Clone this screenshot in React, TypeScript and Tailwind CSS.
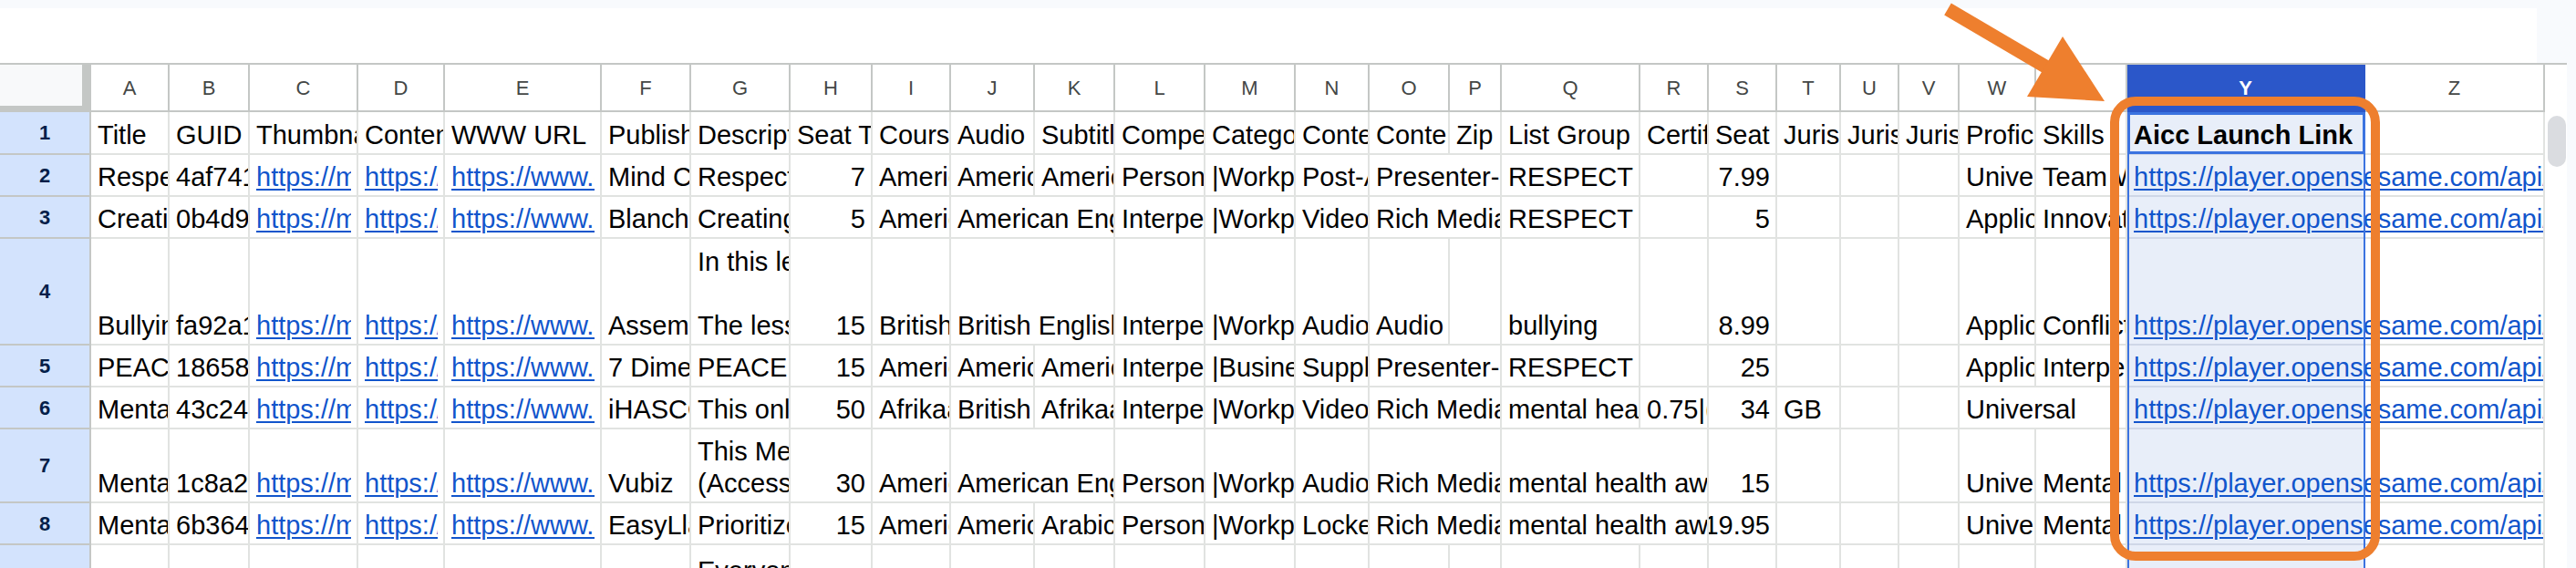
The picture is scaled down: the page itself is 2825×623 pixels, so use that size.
import clsx from 'clsx';

type Cell = { text: string; link?: boolean; num?: boolean; span?: boolean; bold?: boolean };
type Row = Record<string, Cell | string>;

const LETTERS = 'ABCDEFGHIJKLMNOPQRSTUVWXYZ'.split('');

const link = (text: string): Cell => ({ text, link: true });
const num = (text: string): Cell => ({ text, num: true });
const wide = (text: string): Cell => ({ text, span: true });

const launch = (id: string) => link(`https://player.opensesame.com/api/aicc/launch/${id}`);
const media = link('https://media.opensesame.com/thumbnails/course.png');
const content = link('https://content.opensesame.com/course.zip');
const www = link('https://www.opensesame.com/c/course');

const ROWS: Row[] = [
  {
    A: 'Title', B: 'GUID', C: 'Thumbnail URL', D: 'Content URL', E: 'WWW URL', F: 'Publisher',
    G: 'Description', H: 'Seat Time', I: 'Course Language', J: 'Audio', K: 'Subtitles',
    L: 'Competency', M: 'Category', N: 'Content Type', O: 'Content Format', P: 'Zip',
    Q: 'List Group', R: 'Certification', S: 'Seat Price', T: 'Jurisdiction', U: 'Jurisdiction',
    V: 'Jurisdiction', W: 'Proficiency', X: 'Skills', Y: { text: 'Aicc Launch Link', bold: true },
  },
  {
    A: 'Respectful Workplace', B: '4af741c0-92d1', C: media, D: content, E: www, F: 'Mind Candy',
    G: 'Respectful behaviour at work', H: num('7'), I: 'American English', J: 'American English',
    K: 'American English', L: 'Personal Development', M: '|Workplace Skills|', N: 'Post-Assessment',
    O: wide('Presenter-led Video'), Q: 'RESPECT', S: num('7.99'), W: 'Universal', X: 'Team Work',
    Y: launch('4af741c0'),
  },
  {
    A: 'Creating Respect', B: '0b4d9e17-55a0', C: media, D: content, E: www, F: 'Blanchard',
    G: 'Creating a respectful culture', H: num('5'), I: 'American English', J: wide('American English'),
    L: 'Interpersonal Skills', M: '|Workplace Skills|', N: 'Video', O: wide('Rich Media'),
    Q: 'RESPECT', S: num('5'), W: 'Application', X: 'Innovation', Y: launch('0b4d9e17'),
  },
  {
    A: 'Bullying at Work', B: 'fa92a1d3-08bc', C: media, D: content, E: www, F: 'Assemble You',
    G: 'In this lesson we look at bullying\n\nThe lesson covers what to do', H: num('15'),
    I: 'British English', J: wide('British English'), L: 'Interpersonal Skills',
    M: '|Workplace Skills|', N: 'Audio', O: 'Audio', Q: 'bullying', S: num('8.99'),
    W: 'Application', X: 'Conflict Resolution', Y: launch('fa92a1d3'),
  },
  {
    A: 'PEACE Conversations', B: '18658a0f-3e21', C: media, D: content, E: www, F: '7 Dimensions',
    G: 'PEACE conversations at work', H: num('15'), I: 'American English', J: 'American English',
    K: 'American English', L: 'Interpersonal Skills', M: '|Business Skills|', N: 'Supplemental',
    O: wide('Presenter-led Video'), Q: 'RESPECT', S: num('25'), W: 'Application',
    X: 'Interpersonal Skills', Y: launch('18658a0f'),
  },
  {
    A: 'Mental Health Awareness', B: '43c24b7e-9a10', C: media, D: content, E: www, F: 'iHASCO',
    G: 'This online course explains', H: num('50'), I: 'Afrikaans', J: 'British English',
    K: 'Afrikaans', L: 'Interpersonal Skills', M: '|Workplace Skills|', N: 'Video',
    O: wide('Rich Media'), Q: 'mental health awareness', R: '0.75|(CPD)', S: num('34'), T: 'GB',
    W: wide('Universal'), Y: launch('43c24b7e'),
  },
  {
    A: 'Mental Health First Steps', B: '1c8a2f60-d4e3', C: media, D: content, E: www, F: 'Vubiz',
    G: 'This Mental Health course\n(Accessible version)', H: num('30'), I: 'American English',
    J: wide('American English'), L: 'Personal Development', M: '|Workplace Skills|', N: 'Audio',
    O: wide('Rich Media'), Q: wide('mental health awareness'), S: num('15'), W: 'Universal',
    X: 'Mental Health', Y: launch('1c8a2f60'),
  },
  {
    A: 'Mental Health Priorities', B: '6b364c12-7f88', C: media, D: content, E: www, F: 'EasyLlama',
    G: 'Prioritize your wellbeing', H: num('15'), I: 'American English', J: 'American English',
    K: 'Arabic', L: 'Personal Development', M: '|Workplace Skills|', N: 'Locked',
    O: wide('Rich Media'), Q: wide('mental health awareness'), S: num('19.95'), W: 'Universal',
    X: 'Mental Health', Y: launch('6b364c12'),
  },
  {
    G: 'Everyone deserves a safe workplace\nThis course explains\nhow to speak up',
  },
];

function HeaderCell({ letter }: { letter: string }) {
  const active = letter === 'Y';
  return (
    <div
      className={clsx(
        'flex items-center justify-center border-b-2 border-r-2 text-[22px]',
        active ? 'border-[#2b57c9] bg-[#2b57c9] font-bold text-white' : 'border-[#c4c7c5] text-[#444746]',
      )}
    >
      {letter}
    </div>
  );
}

function DataCell({ cell, letter }: { cell?: Cell | string; letter: string }) {
  const c: Cell | undefined = typeof cell === 'string' ? { text: cell } : cell;
  const inY = letter === 'Y';
  return (
    <div
      className={clsx(
        'flex min-w-0 flex-col justify-end whitespace-pre border-b-2 border-r-2 pb-[2px] pl-[7px] pr-[6px] leading-[35px]',
        inY ? 'overflow-visible border-[#cfd7e7] bg-[#e8eef9]' : 'overflow-hidden border-[#e1e3e1]',
        c?.span && 'col-span-2',
        c?.num && 'items-end',
        c?.bold && 'font-bold',
      )}
    >
      {c?.link ? (
        <span
          className={clsx(
            'overflow-hidden text-[#1155cc] underline decoration-2 underline-offset-[3px]',
            inY && 'block w-[449px]',
          )}
        >
          {c.text}
        </span>
      ) : (
        c?.text
      )}
    </div>
  );
}

export default function App() {
  return (
    <div className="relative h-[623px] w-[2825px] overflow-hidden bg-[#f8fafd] font-['Liberation_Sans',Arial,sans-serif] text-[29px] text-black">
      <div className="mt-[9px] h-[60px] w-[2782px] bg-white" />

      <div className="flex">
        <div className="relative grid grid-cols-[100px_86px_88px_119px_95px_172px_98px_109px_90px_86px_92px_88px_99px_99px_81px_88px_57px_152px_75px_75px_70px_64px_66px_84px_100px_261px_197px] grid-rows-[52px_47px_46px_46px_117px_46px_46px_81px_46px_120px] border-t-2 border-[#c4c7c5] bg-white">
          {/* frozen corner */}
          <div className="border-b-[7px] border-r-[10px] border-[#c4c7c5] bg-[#f8f9fa]" />
          {LETTERS.map((l) => (
            <HeaderCell key={l} letter={l} />
          ))}

          {ROWS.map((row, r) => {
            const cells = [];
            let skip = false;
            LETTERS.forEach((letter) => {
              if (skip) {
                skip = false;
                return;
              }
              const cell = row[letter];
              if (typeof cell === 'object' && cell.span) skip = true;
              cells.push(<DataCell key={`${r}-${letter}`} cell={cell} letter={letter} />);
            });
            return [
              <div
                key={`h${r}`}
                className="flex items-center justify-center border-b-2 border-r-2 border-[#c4c7c5] bg-[#d3e3fd] text-[22px] font-bold text-[#041e49]"
              >
                {r + 1}
              </div>,
              ...cells,
            ];
          })}

          {/* selected column frame and active cell */}
          <div className="pointer-events-none absolute bottom-0 left-0 right-0 top-0 col-start-[26] col-end-[27] row-start-[2] row-end-[11] border-x-2 border-[#3b73e0]" />
          <div className="pointer-events-none absolute bottom-[1px] left-0 right-0 top-0 col-start-[26] col-end-[27] row-start-[2] row-end-[3] border-[3px] border-[#3b73e0]" />
        </div>

        {/* vertical scrollbar */}
        <div className="h-[554px] w-[24px] border-t-2 border-[#c4c7c5] bg-white">
          <div className="ml-[3px] mt-[56px] h-[56px] w-[20px] rounded-full bg-[#dadce0]" />
        </div>
      </div>

      {/* annotation: arrow and highlight around column Y */}
      <svg className="pointer-events-none absolute left-0 top-0" width={2825} height={623} viewBox="0 0 2825 623">
        <rect x={2319} y={111} width={286} height={499} rx={23} fill="none" stroke="#ee7f2e" strokeWidth={10} />
        <line x1={2136} y1={10} x2={2250} y2={77} stroke="#ee7f2e" strokeWidth={15} />
        <polygon points="2262,40 2223,106 2308,111" fill="#ee7f2e" />
      </svg>
    </div>
  );
}
